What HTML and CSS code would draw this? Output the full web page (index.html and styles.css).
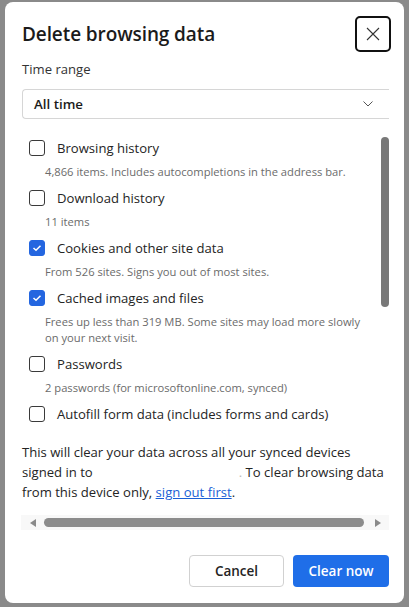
FILE: index.html
```html
<!DOCTYPE html>
<html>
<head>
<meta charset="utf-8">
<link rel="stylesheet" href="styles.css">
</head>
<body>
<div class="dialog">
  <div class="header">
    <h1 class="title">Delete browsing data</h1>
    <button class="close" aria-label="Close">
      <svg width="14" height="14" viewBox="0 0 14 14"><path d="M1 1L13 13M13 1L1 13" stroke="#333" stroke-width="1.1" fill="none"/></svg>
    </button>
  </div>
  <div class="field-label">Time range</div>
  <div class="select">
    <span>All time</span>
    <svg width="10" height="6" viewBox="0 0 10 6"><path d="M0.5 0.5L5 5L9.5 0.5" stroke="#555" stroke-width="1" fill="none"/></svg>
  </div>
  <div class="list">
    <div class="item">
      <div class="row"><span class="cb"></span><span class="lbl">Browsing history</span></div>
      <div class="desc">4,866 items. Includes autocompletions in the address bar.</div>
    </div>
    <div class="item">
      <div class="row"><span class="cb"></span><span class="lbl">Download history</span></div>
      <div class="desc">11 items</div>
    </div>
    <div class="item">
      <div class="row"><span class="cb on"><svg width="10" height="8" viewBox="0 0 10 8"><path d="M1.5 4L4 6.3L8.5 1.7" stroke="#fff" stroke-width="1.5" fill="none"/></svg></span><span class="lbl">Cookies and other site data</span></div>
      <div class="desc">From 526 sites. Signs you out of most sites.</div>
    </div>
    <div class="item">
      <div class="row"><span class="cb on"><svg width="10" height="8" viewBox="0 0 10 8"><path d="M1.5 4L4 6.3L8.5 1.7" stroke="#fff" stroke-width="1.5" fill="none"/></svg></span><span class="lbl">Cached images and files</span></div>
      <div class="desc">Frees up less than 319 MB. Some sites may load more slowly on your next visit.</div>
    </div>
    <div class="item">
      <div class="row"><span class="cb"></span><span class="lbl">Passwords</span></div>
      <div class="desc">2 passwords (for microsoftonline.com, synced)</div>
    </div>
    <div class="item">
      <div class="row"><span class="cb"></span><span class="lbl">Autofill form data (includes forms and cards)</span></div>
    </div>
    <div class="vthumb"></div>
  </div>
  <p class="note">This will clear your data across all your synced devices signed in to<span class="redacted"></span><span class="dot">.</span> To clear browsing data from this device only, <a href="#" class="link">sign out first</a>.</p>
  <div class="hscroll">
    <span class="arrow left"></span>
    <span class="hthumb"></span>
    <span class="arrow right"></span>
  </div>
  <div class="actions">
    <button class="btn cancel">Cancel</button>
    <button class="btn primary">Clear now</button>
  </div>
</div>
</body>
</html>
```

FILE: styles.css
```css
* { box-sizing: border-box; }
html, body { margin: 0; padding: 0; }
body {
  background: #8a8a8a;
  width: 409px;
  height: 607px;
  overflow: hidden;
  font-family: "Open Sans", "Noto Sans", sans-serif;
  color: #242424;
}
.dialog {
  margin: 2px 0 0 5px;
  width: 399px;
  height: 601px;
  background: #fff;
  border-radius: 8px;
  padding: 14px 15px 0 17px;
  display: flex;
  flex-direction: column;
}
.header {
  display: flex;
  justify-content: space-between;
  align-items: center;
  height: 36px;
  margin-right: -2px;
}
.title {
  margin: 0;
  font-size: 19px;
  font-weight: 600;
  color: #1b1b1b;
  letter-spacing: -0.1px;
}
.close {
  width: 36px;
  height: 36px;
  border: 2px solid #111;
  border-radius: 5px;
  background: #fff;
  display: flex;
  align-items: center;
  justify-content: center;
  padding: 0;
}
.field-label {
  margin-top: 7px;
  font-size: 13.1px;
  line-height: 20px;
  color: #333;
}
.select {
  margin-top: 10px;
  height: 30px;
  border: 1px solid #d6d6d6;
  border-right: none;
  border-radius: 4px 0 0 4px;
  display: flex;
  align-items: center;
  justify-content: space-between;
  padding: 0 16px 0 11px;
  font-size: 13.3px;
  font-weight: 600;
  color: #1b1b1b;
}
.list {
  position: relative;
  margin-top: 9px;
  height: 303px;
  overflow: hidden;
  padding-top: 10px;
}
.item { padding-left: 7px; }
.row {
  display: flex;
  align-items: center;
  height: 20px;
}
.cb {
  width: 16px;
  height: 16px;
  border: 1.5px solid #3a3a3a;
  border-radius: 3px;
  display: flex;
  align-items: center;
  justify-content: center;
  margin-right: 12px;
  flex: none;
}
.cb.on {
  background: #2466e0;
  border-color: #2466e0;
}
.lbl {
  font-size: 13.1px;
  color: #242424;
}
.desc {
  margin: 6px 0 8px 16px;
  font-size: 11.2px;
  line-height: 16px;
  color: #6b6b6b;
  padding-right: 20px;
}
.vthumb {
  position: absolute;
  right: 0;
  top: 9px;
  width: 8px;
  height: 170px;
  border-radius: 4px;
  background: #787878;
}
.note {
  margin: 11px 0 0;
  font-size: 13.1px;
  line-height: 20px;
  color: #242424;
}
.redacted {
  display: inline-block;
  width: 146px;
}
.dot { color: #bbb; }
.link { color: #1a5fd6; }
.hscroll {
  margin: 13px 0 0 -1px;
  height: 15px;
  background: #f8f8f8;
  display: flex;
  align-items: center;
  padding: 0 8px 0 9px;
}
.arrow {
  width: 0;
  height: 0;
  border-top: 4.5px solid transparent;
  border-bottom: 4.5px solid transparent;
}
.arrow.left { border-right: 6px solid #8a8a8a; }
.arrow.right { border-left: 6px solid #8a8a8a; }
.hthumb {
  flex: 1;
  height: 9px;
  border-radius: 5px;
  background: #8c8c8c;
  margin: 0 11px 0 8px;
}
.actions {
  margin-top: 25px;
  display: flex;
  justify-content: flex-end;
  gap: 9px;
}
.btn {
  height: 32px;
  border-radius: 4px;
  font-family: inherit;
  font-size: 13.5px;
  font-weight: 600;
  padding: 0;
}
.cancel {
  width: 95px;
  background: #fff;
  border: 1px solid #d1d1d1;
  color: #242424;
}
.primary {
  width: 96px;
  background: #1f6ee8;
  border: none;
  color: #fff;
}
```
